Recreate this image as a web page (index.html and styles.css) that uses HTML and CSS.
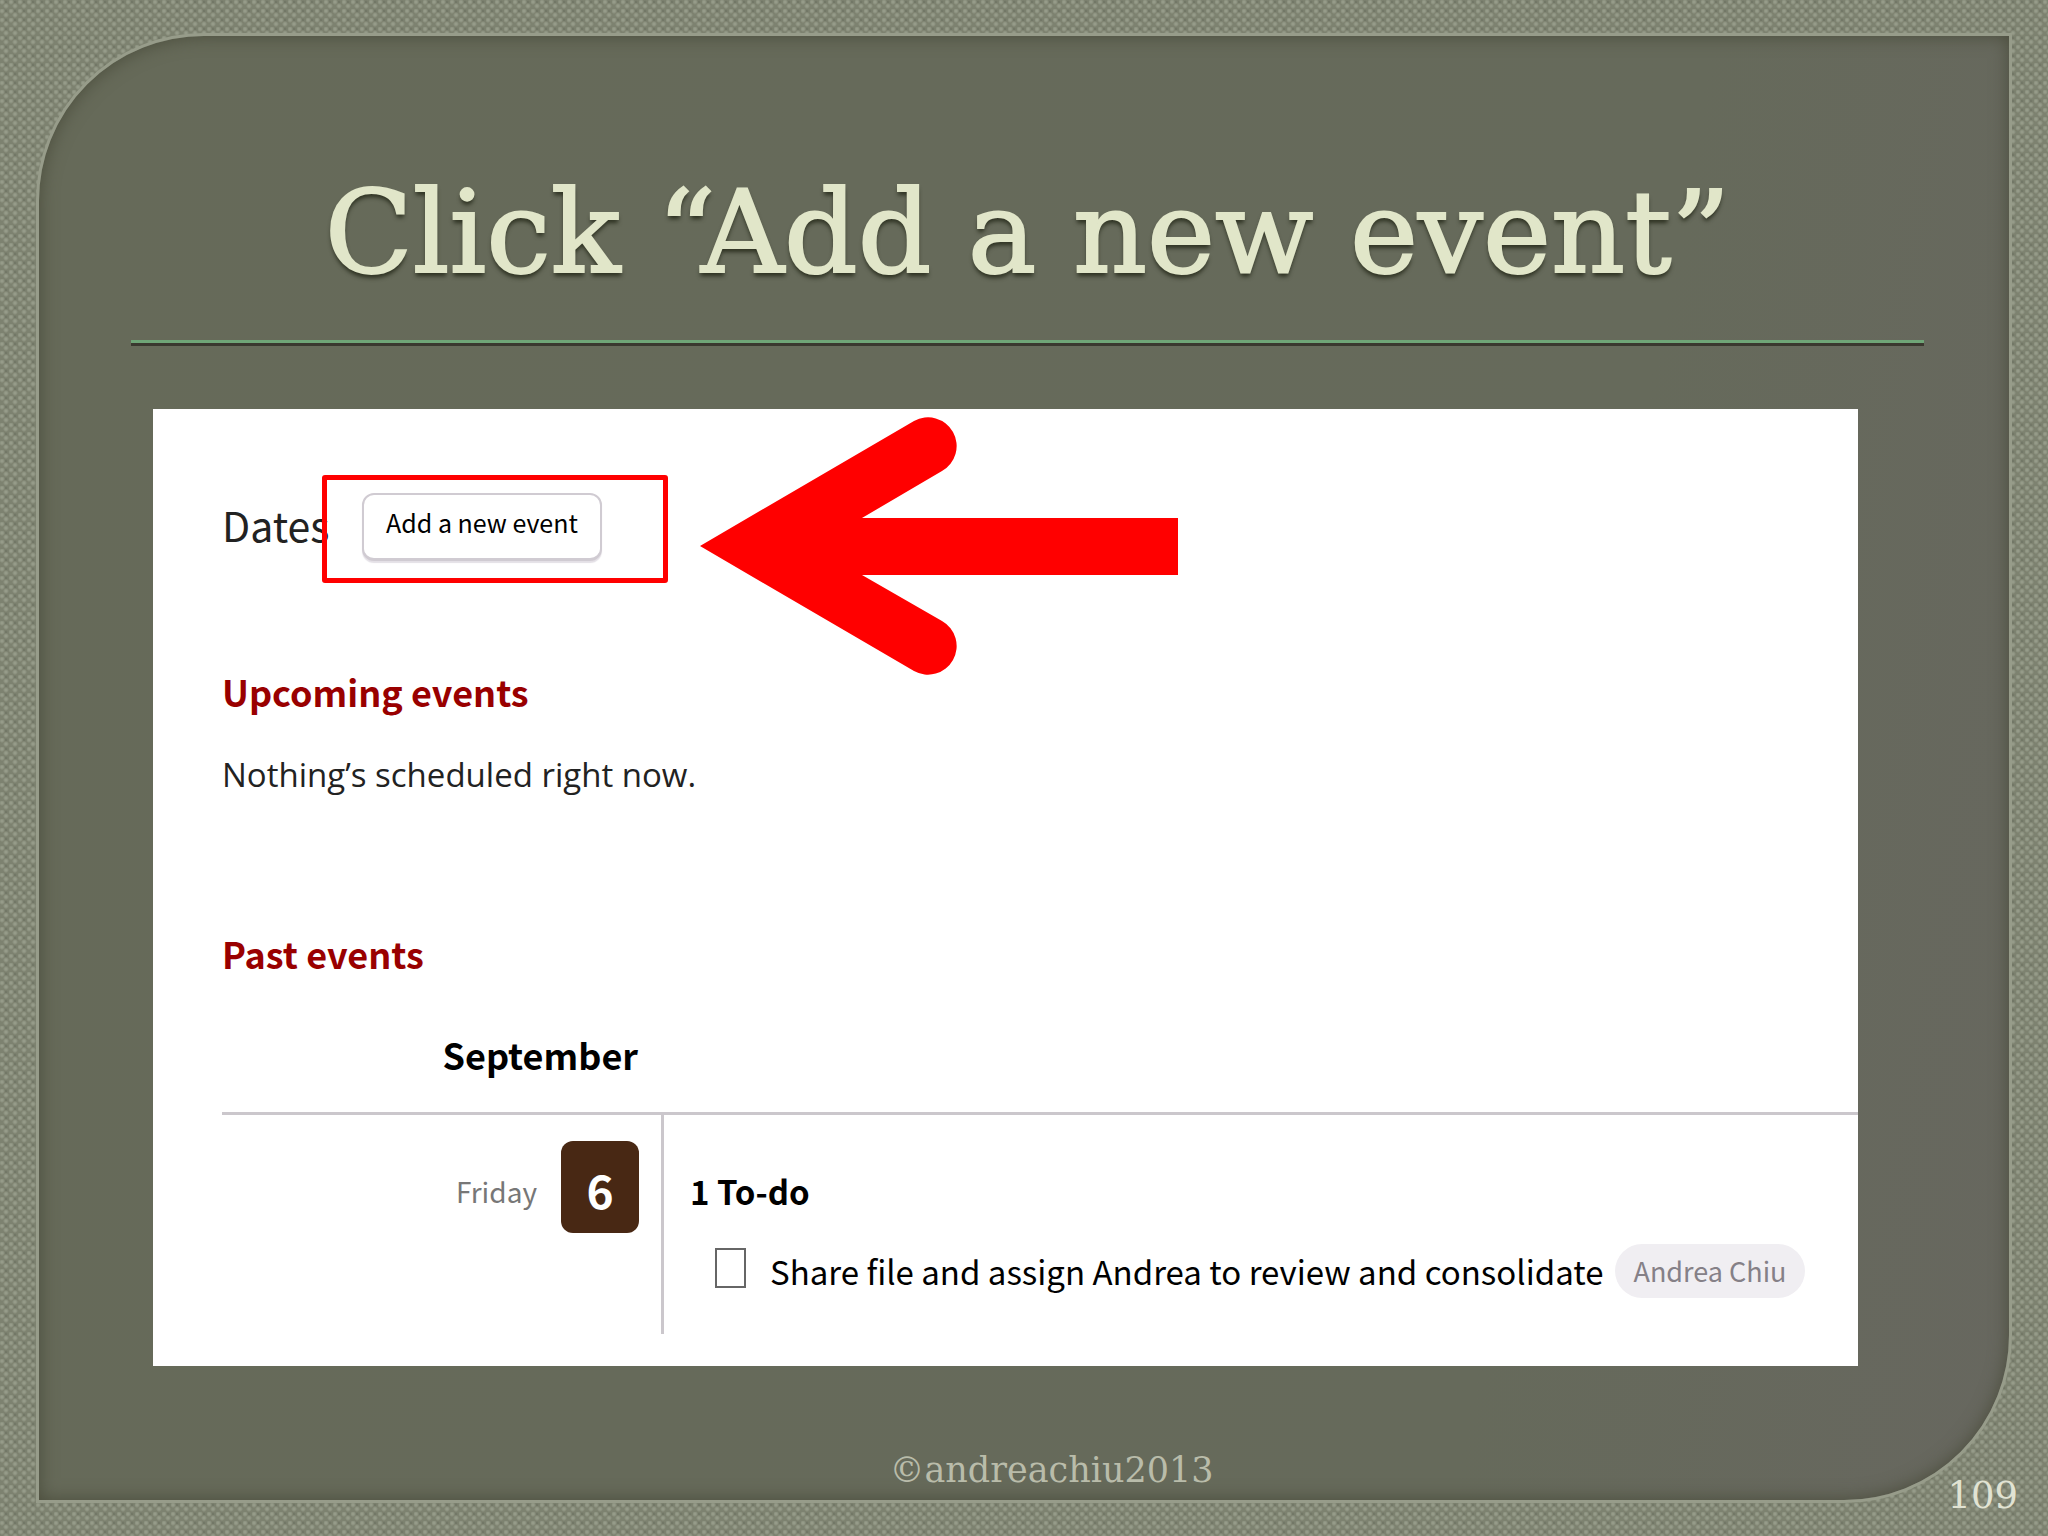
FILE: index.html
```html
<!DOCTYPE html>
<html lang="en">
<head>
    <meta charset="UTF-8">
    <meta name="viewport" content="width=device-width, initial-scale=1.0">
    <title>Click “Add a new event”</title>
    <link rel="stylesheet" href="styles.css">
</head>
<body>
    <main class="slide">
        <h1>Click “Add a new event”</h1>

        <section class="card">
            <div class="dates-row">
                <h2 class="dates-title">Dates</h2>
                <div class="highlight">
                    <button type="button" class="add-btn">Add a new event</button>
                </div>
            </div>
            <svg class="arrow" viewBox="0 0 478 258" aria-hidden="true">
                <path d="M0 129 L214 4 A28.5 28.5 0 1 1 242 54 L162 101 H478 V158 H162 L242 204 A28.5 28.5 0 1 1 214 254 Z" fill="#ff0000"/>
            </svg>

            <h3 class="section-title">Upcoming events</h3>
            <p class="empty">Nothing’s scheduled right now.</p>

            <h3 class="section-title past">Past events</h3>
            <h4 class="month">September</h4>

            <div class="day">
                <div class="day-date">
                    <span class="weekday">Friday</span>
                    <span class="day-number">6</span>
                </div>
                <div class="day-items">
                    <h5>1 To-do</h5>
                    <div class="todo">
                        <input type="checkbox" id="todo1">
                        <label for="todo1">Share file and assign Andrea to review and consolidate</label>
                        <span class="assignee">Andrea Chiu</span>
                    </div>
                </div>
            </div>
        </section>

        <footer>©andreachiu2013</footer>
    </main>
    <div class="page-number">109</div>
</body>
</html>
```
FILE: styles.css
```css
* {
    box-sizing: border-box;
}
body {
    margin: 0;
    min-height: 100vh;
    padding: 33px 36px;
    display: flex;
    position: relative;
    font-family: "Noto Sans CJK SC", "Open Sans", sans-serif;
    color: #000;
    /* woven canvas */
    background-color: #7d8270;
    background-image:
        radial-gradient(circle at 2px 2px, #969b89 1px, transparent 3px),
        radial-gradient(circle at 6px 6px, #969b89 1px, transparent 3px),
        radial-gradient(circle at 6px 2px, #6d7261 0, transparent 2px);
    background-size: 9px 9px;
}
h1, h2, h3, h4, h5, p {
    margin: 0;
}
.slide {
    flex: 1;
    padding: 120px 85px 0 92px;
    border: 3px solid #979c8a;
    border-radius: 168px 0 168px 0;
    background: linear-gradient(100deg, #666a59 0%, #666a5b 75%, #67675f 100%);
    box-shadow: inset 0 0 18px #4a4c3b;
}
h1 {
    padding-bottom: 32px;
    border-bottom: 3px solid #6fa577;
    box-shadow: 0 3px 0 #3a382f;
    font-family: "DejaVu Serif", serif;
    font-size: 115px;
    font-weight: 400;
    line-height: 152px;
    text-align: center;
    white-space: nowrap;
    color: #e1e6c9;
    -webkit-text-stroke: 2px #e1e6c9;
    text-shadow: 0 4px 4px #2c3020;
}
.card {
    position: relative;
    margin: 66px 66px 0 22px;
    padding: 66px 0 32px 69px;
    background: #fff;
    white-space: nowrap;
}
.dates-row {
    display: flex;
    align-items: center;
}
.dates-title {
    width: 100px;
    padding-bottom: 10px;
    font-size: 41px;
    font-weight: 400;
    line-height: 60px;
    color: #222;
}
.highlight {
    width: 346px;
    height: 108px;
    padding: 13px 35px;
    border: 5px solid #ff0000;
    border-radius: 3px;
}
.add-btn {
    width: 240px;
    height: 68px;
    padding: 0 0 10px;
    border: 2px solid #d0cbd2;
    border-bottom-width: 3px;
    border-radius: 12px;
    background: #fff;
    box-shadow: 0 2px 1px #e4e0e6;
    font-family: inherit;
    font-size: 25px;
    color: #000;
}
.arrow {
    position: absolute;
    top: 8px;
    left: 547px;
    width: 478px;
}
.section-title {
    margin-top: 78px;
    font-size: 36px;
    line-height: 60px;
    color: #990000;
}
.empty {
    margin-top: 24px;
    font-family: "Open Sans", sans-serif;
    font-size: 33px;
    line-height: 60px;
    color: #222;
}
.past {
    margin-top: 118px;
}
.month {
    margin: 41px 0 28px;
    width: 416px;
    font-size: 36px;
    line-height: 60px;
    text-align: right;
}
.day {
    display: flex;
    border-top: 3px solid #cbc7cc;
}
.day-date {
    flex: none;
    width: 442px;
    height: 219px;
    padding: 26px 22px 0 0;
    display: flex;
    justify-content: flex-end;
    gap: 24px;
    border-right: 3px solid #cbc7cc;
}
.weekday {
    font-size: 28px;
    line-height: 100px;
    color: #777;
}
.day-number {
    width: 78px;
    height: 92px;
    border-radius: 12px;
    background: #482814;
    color: #fff;
    font-size: 46px;
    font-weight: 700;
    line-height: 96px;
    text-align: center;
}
.day-items {
    padding: 46px 0 0 26px;
}
h5 {
    font-size: 33px;
    line-height: 60px;
}
.todo {
    margin-top: 20px;
    padding-left: 25px;
    display: flex;
    align-items: center;
}
.todo input {
    appearance: none;
    width: 31px;
    height: 40px;
    margin: 0 24px 6px 0;
    border: 2px solid #666;
    background: #fff;
}
.todo label {
    font-size: 33px;
    line-height: 60px;
}
.assignee {
    margin-left: 12px;
    padding: 0 18px;
    border-radius: 27px;
    background: #f0eef2;
    font-size: 27px;
    line-height: 54px;
    color: #858087;
}
footer {
    margin-top: 80px;
    padding-left: 48px;
    font-family: "DejaVu Serif", serif;
    font-size: 35px;
    line-height: 48px;
    text-align: center;
    color: #b9bcaa;
}
.page-number {
    position: absolute;
    right: 30px;
    bottom: 14px;
    font-family: "DejaVu Serif", serif;
    font-size: 37px;
    line-height: 52px;
    color: #e1e3d3;
}
```
